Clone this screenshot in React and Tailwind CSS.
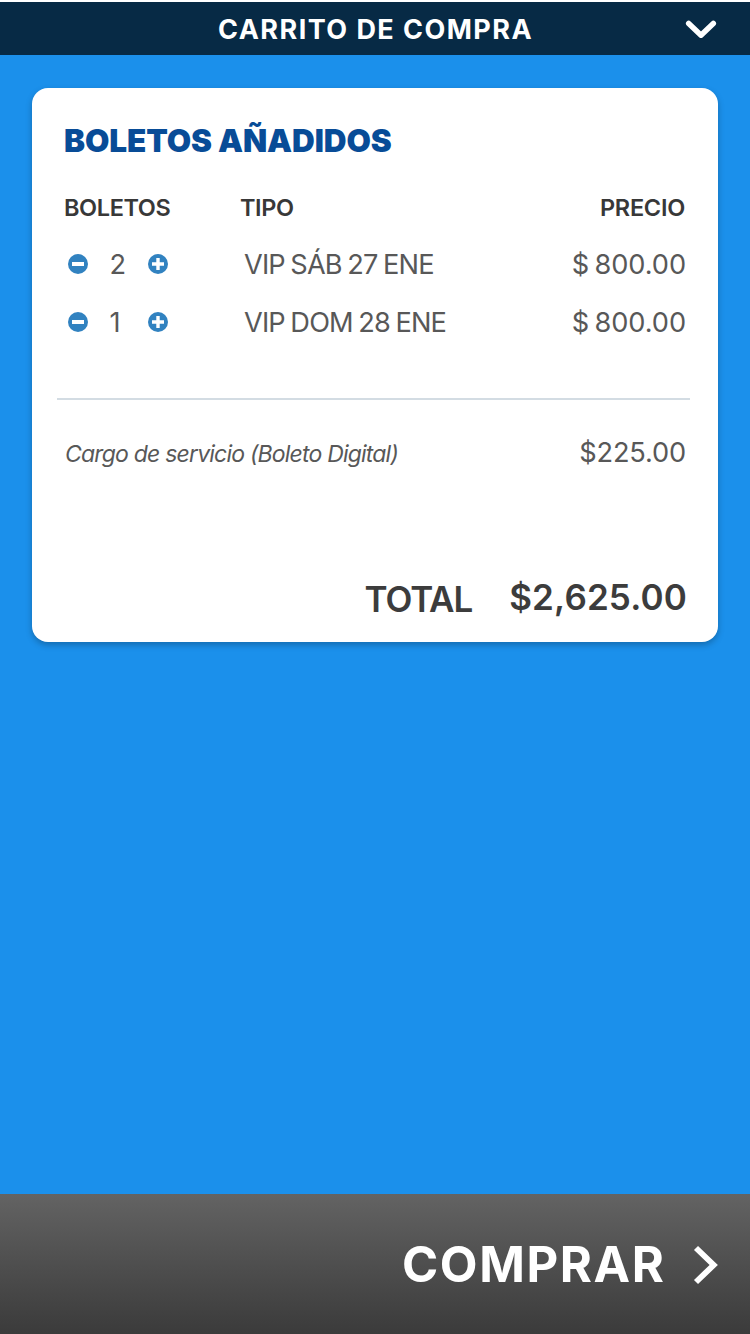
const items = [
  { qty: 2, type: 'VIP SÁB 27 ENE', price: '$ 800.00' },
  { qty: 1, type: 'VIP DOM 28 ENE', price: '$ 800.00' },
];

function RoundButton({ label, plus }) {
  return (
    <button aria-label={label} className="size-5 shrink-0">
      <svg viewBox="0 0 20 20" className="block size-5">
        <circle cx="10" cy="10" r="10" fill="#3182c0" />
        <path d={plus ? 'M4 10h12M10 4v12' : 'M4 10h12'} stroke="#fff" strokeWidth={plus ? 3.4 : 4} fill="none" />
      </svg>
    </button>
  );
}

function ItemRow({ item }) {
  return (
    <div className="flex h-[58px] items-center pl-1 text-[27.2px] font-normal text-[#585858]">
      <RoundButton label="Quitar boleto" />
      <span className="ml-[21.5px] w-[38.5px] pt-0.5">{item.qty}</span>
      <RoundButton label="Añadir boleto" plus />
      <span className="ml-[76px] pt-0.5 tracking-[-0.85px] [word-spacing:-1.3px]">{item.type}</span>
      <span className="ml-auto pt-0.5 tracking-[-0.05px] [word-spacing:-2.2px]">{item.price}</span>
    </div>
  );
}

export default function App() {
  return (
    <div className="flex h-[1334px] w-[750px] flex-col overflow-hidden bg-[#1b90eb] font-['Inter',sans-serif] whitespace-nowrap">
      <header className="flex h-[55px] items-center border-t-2 border-white bg-[#072a45] pr-8 pl-[218px] text-white">
        <h1 className="pt-[3px] text-[27px] leading-8 font-bold tracking-[1.45px]">CARRITO DE COMPRA</h1>
        <button aria-label="Cerrar" className="ml-auto">
          <svg viewBox="0 0 34 24" className="block h-6 w-[34px]" fill="none" stroke="#fff" strokeWidth="5.5" strokeLinecap="round" strokeLinejoin="round">
            <path d="M4.7 6.5 17 18.2 29.3 6.5" />
          </svg>
        </button>
      </header>

      <main className="flex-1 px-8 pt-[33px]">
        <section className="flex h-[554px] flex-col rounded-[16px] bg-white px-8 shadow-[0_3px_6px_rgba(0,0,0,0.25)]">
          <h2 className="mt-8 h-[42px] text-[31.5px] leading-[42px] font-black tracking-[-0.1px] text-[#084c97]">BOLETOS AÑADIDOS</h2>
          <div className="mt-[30px] flex h-8 items-center text-[23.5px] font-semibold text-[#383838]">
            <span className="w-[176px] tracking-[-0.4px]">BOLETOS</span>
            <span className="tracking-[-0.4px]">TIPO</span>
            <span className="mr-px ml-auto tracking-[-0.25px]">PRECIO</span>
          </div>
          <div className="mt-[11px]">
            {items.map((item) => (
              <ItemRow key={item.type} item={item} />
            ))}
          </div>
          <hr className="mt-[47px] -mr-1 -ml-[7px] border-t-2 border-[#d3dce3]" />
          <div className="mt-[34px] flex h-10 items-center justify-between text-[#585858]">
            <span className="pl-px pt-px text-[23px] font-normal italic tracking-[-0.8px]">Cargo de servicio (Boleto Digital)</span>
            <span className="-mt-0.5 text-[27.2px] font-normal tracking-[-0.15px]">$225.00</span>
          </div>
          <div className="mt-[104px] flex h-[42px] items-center justify-end text-[35px] font-semibold text-[#3c3c3c]">
            <span className="mr-[37px] pt-px tracking-[-1.1px]">TOTAL</span>
            <span className="-mr-px -mt-1 tracking-[0.15px]">$2,625.00</span>
          </div>
        </section>
      </main>

      <footer className="flex h-[140px] items-center justify-end bg-linear-to-b from-[#636363] to-[#3b3b3b] pr-[31px] text-white">
        <button className="flex items-center pt-0.5">
          <span className="text-[49px] font-bold tracking-[1.6px]">COMPRAR</span>
          <svg viewBox="0 0 26 40" className="ml-[27.5px] block h-10 w-[26px]" fill="none" stroke="#fff" strokeWidth="5.8">
            <path d="M3 3 20.7 20 3 37" />
          </svg>
        </button>
      </footer>
    </div>
  );
}
